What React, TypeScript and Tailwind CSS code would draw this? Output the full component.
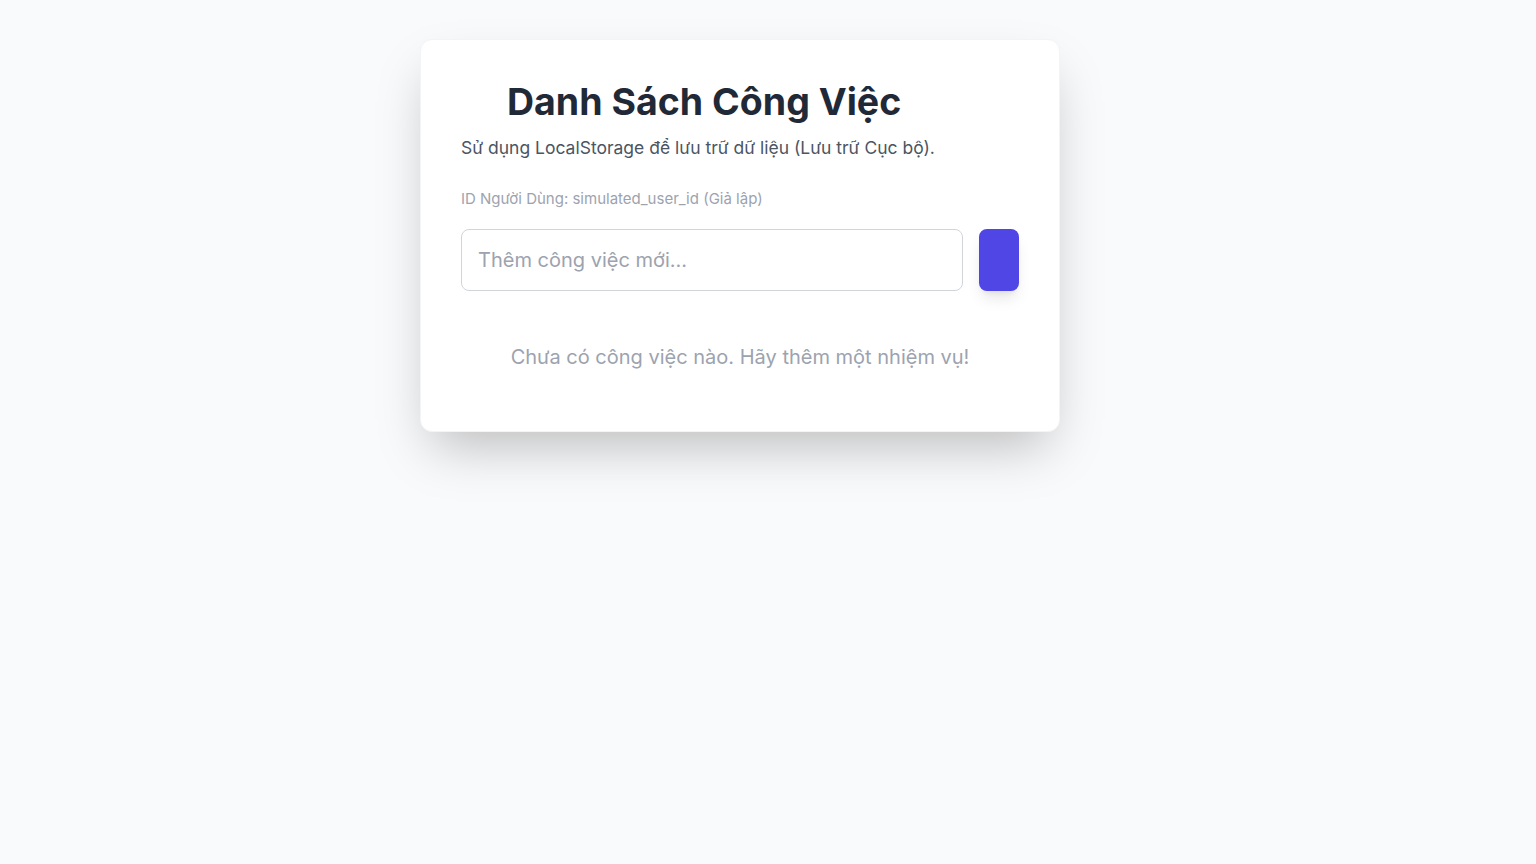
export default function App() {
  return (
    <div
      className="min-h-screen bg-gray-50 pt-[39px] pl-[420px]"
      style={{ fontFamily: "Inter, 'Noto Sans', sans-serif" }}
    >
      <div className="w-[640px] bg-white rounded-xl shadow-2xl border border-gray-100 px-10 pt-10 pb-[60px]">
        {/* HEADER */}
        <div className="flex items-center gap-[10px]">
          <span className="w-9 h-9" />
          <h1 className="text-[37.5px] font-bold text-[#1f2937] leading-[44px]">Danh Sách Công Việc</h1>
        </div>
        <p className="text-[#4b5563] text-[17.5px] mt-[11px]">
          Sử dụng LocalStorage để lưu trữ dữ liệu (Lưu trữ Cục bộ).
        </p>
        <p className="text-[15px] text-[#9ca3af] mt-[27px]">ID Người Dùng: simulated_user_id (Giả lập)</p>

        {/* FORM */}
        <div className="flex gap-4 mt-[18px]">
          <input
            placeholder="Thêm công việc mới..."
            className="flex-1 h-[62px] border border-[#d1d5db] rounded-lg px-4 text-xl placeholder-[#9ca3af] outline-none"
          />
          <button className="w-10 h-[62px] bg-[#4f46e5] rounded-lg shadow-lg" />
        </div>

        {/* LIST */}
        <p className="text-center text-xl text-[#9ca3af] mt-[52px]">
          Chưa có công việc nào. Hãy thêm một nhiệm vụ!
        </p>
      </div>
    </div>
  );
}
